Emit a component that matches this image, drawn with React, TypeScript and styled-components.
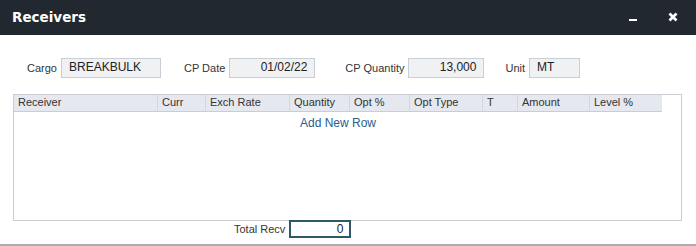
import React from "react";
import styled, { createGlobalStyle } from "styled-components";

const Global = createGlobalStyle`
  html, body { margin: 0; padding: 0; background: #ffffff; }
  body { font-family: "Liberation Sans", Arial, sans-serif; }
`;

const Dialog = styled.div`
  width: 696px;
  height: 246px;
  display: flex;
  flex-direction: column;
  background: #fff;
  box-sizing: border-box;
  border-bottom: 2px solid #acacac;
`;

const TitleBar = styled.div`
  height: 35px;
  background: #22282f;
  display: flex;
  align-items: center;
  padding: 0 0 0 12px;
  box-sizing: border-box;
`;

const Title = styled.div`
  flex: 1;
  color: #ffffff;
  font-family: "DejaVu Sans", sans-serif;
  font-weight: bold;
  font-size: 13.5px;
  margin-top: -2px;
`;

const IconButton = styled.button<{ $mr: number }>`
  background: none;
  border: none;
  padding: 0;
  margin-right: ${(p) => p.$mr}px;
  width: 12px;
  height: 12px;
  display: flex;
  align-items: center;
  justify-content: center;
  cursor: pointer;
  margin-top: -1px;
`;

const Body = styled.div`
  flex: 1;
  display: flex;
  flex-direction: column;
  padding: 23px 14px 0 13px;
`;

const FieldRow = styled.div`
  display: flex;
  align-items: center;
  height: 20px;
  padding-left: 14px;
`;

const Field = styled.div<{ $ml: number }>`
  display: flex;
  align-items: center;
  margin-left: ${(p) => p.$ml}px;
  gap: 4px;
`;

const Label = styled.span`
  font-size: 11px;
  color: #333333;
`;

const ReadBox = styled.div<{ $w: number; $right?: boolean }>`
  width: ${(p) => p.$w}px;
  height: 20px;
  box-sizing: border-box;
  border: 1px solid #c9cfd6;
  background: #f0f1f3;
  font-size: 12px;
  color: #222;
  display: flex;
  align-items: center;
  justify-content: ${(p) => (p.$right ? "flex-end" : "flex-start")};
  padding: 0 7px 2px 7px;
`;

const Table = styled.div`
  margin-top: 16px;
  height: 127px;
  box-sizing: border-box;
  border: 1px solid #c9cdd4;
  display: flex;
  flex-direction: column;
`;

const HeadRow = styled.div`
  display: flex;
  height: 17px;
`;

const HeadCell = styled.div<{ $w: number }>`
  width: ${(p) => p.$w}px;
  box-sizing: border-box;
  background: #e6e8f0;
  border-right: 1px solid #d2d6de;
  border-bottom: 1px solid #c9cdd4;
  font-size: 11px;
  color: #333;
  padding: 1px 0 0 4px;
  &:last-of-type { border-right: none; }
`;

const AddRow = styled.a`
  display: block;
  width: 648px;
  text-align: center;
  font-size: 12px;
  color: #2b5c8c;
  margin-top: 4px;
  cursor: pointer;
`;

const Footer = styled.div`
  display: flex;
  justify-content: flex-start;
  align-items: center;
  margin-top: -1px;
  padding-left: 221px;
  gap: 4px;
`;

const TotalBox = styled.div`
  width: 62px;
  height: 18px;
  box-sizing: border-box;
  border: 2px solid #2d5a6b;
  font-size: 12px;
  color: #222;
  display: flex;
  align-items: center;
  justify-content: flex-end;
  padding: 0 6px 1px 0;
`;

const cols: [string, number][] = [
  ["Receiver", 144],
  ["Curr", 48],
  ["Exch Rate", 84],
  ["Quantity", 60],
  ["Opt %", 60],
  ["Opt Type", 73],
  ["T", 35],
  ["Amount", 72],
  ["Level %", 72],
];

export default function App() {
  return (
    <>
      <Global />
      <Dialog>
        <TitleBar>
          <Title>Receivers</Title>
          <IconButton $mr={28} aria-label="minimize">
            <svg width="8" height="12" viewBox="0 0 8 12">
              <rect x="0" y="8" width="8" height="2" fill="#fff" />
            </svg>
          </IconButton>
          <IconButton $mr={17} aria-label="close">
            <svg width="10" height="10" viewBox="0 0 10 10">
              <path d="M1.5 1.5 L8.5 8.5 M8.5 1.5 L1.5 8.5" stroke="#fff" strokeWidth="2.8" strokeLinecap="butt" />
            </svg>
          </IconButton>
        </TitleBar>
        <Body>
          <FieldRow>
            <Field $ml={0}>
              <Label>Cargo</Label>
              <ReadBox $w={100}>BREAKBULK</ReadBox>
            </Field>
            <Field $ml={23}>
              <Label>CP Date</Label>
              <ReadBox $w={86} $right>01/02/22</ReadBox>
            </Field>
            <Field $ml={30}>
              <Label>CP Quantity</Label>
              <ReadBox $w={76} $right>13,000</ReadBox>
            </Field>
            <Field $ml={21}>
              <Label>Unit</Label>
              <ReadBox $w={51}>MT</ReadBox>
            </Field>
          </FieldRow>
          <Table>
            <HeadRow>
              {cols.map(([name, w]) => (
                <HeadCell key={name} $w={w}>
                  {name}
                </HeadCell>
              ))}
            </HeadRow>
            <AddRow>Add New Row</AddRow>
          </Table>
          <Footer>
            <Label>Total Recv</Label>
            <TotalBox>0</TotalBox>
          </Footer>
        </Body>
      </Dialog>
    </>
  );
}
